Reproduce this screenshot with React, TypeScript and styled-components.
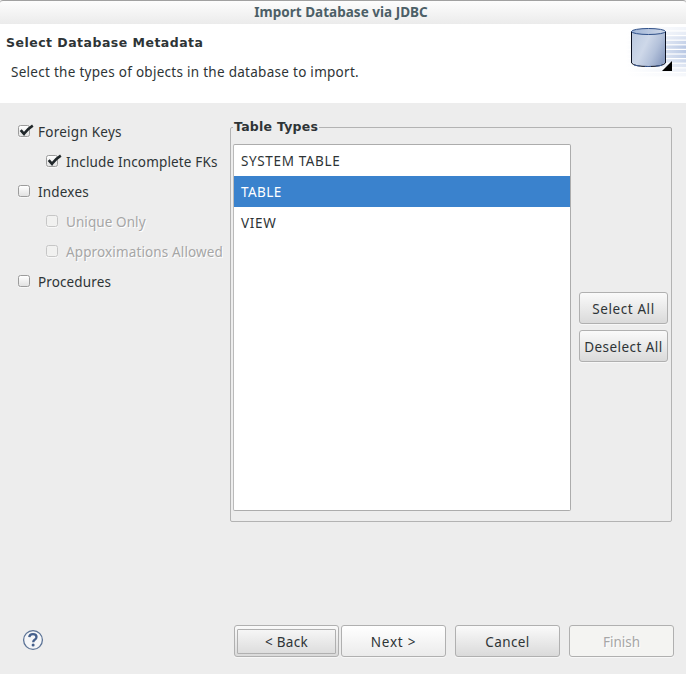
import React, { useState } from "react";
import styled, { createGlobalStyle, css } from "styled-components";

const GlobalStyle = createGlobalStyle`
  * { box-sizing: border-box; }
  body {
    margin: 0;
    background: #ededed;
    color: #2e3436;
    font-family: "Noto Sans", "Open Sans", sans-serif;
    font-size: 13.5px;
    line-height: 20px;
  }
`;

const Dialog = styled.main`
  width: 686px;
  height: 674px;
  display: flex;
  flex-direction: column;
  background: #ededed;
  overflow: hidden;
`;

const TitleBar = styled.header`
  height: 24px;
  flex: none;
  display: flex;
  justify-content: center;
  padding: 1px 4px 0 0;
  border-top: 1px solid #a1a1a1;
  border-radius: 3px 3px 0 0;
  background: linear-gradient(#fdfdfd, #ebebeb);
  color: #4c5f67;
  font-weight: 700;
`;

const Banner = styled.section`
  height: 79px;
  flex: none;
  display: flex;
  justify-content: space-between;
  background: #fff;
`;

const BannerText = styled.div`
  padding: 9px 0 0 6px;
`;

const Heading = styled.h1`
  margin: 0;
  font: 700 12.5px/20px "DejaVu Sans", sans-serif;
`;

const Message = styled.p`
  margin: 9px 0 0 5px;
`;

const Label = styled.span<{ $track?: number }>`
  letter-spacing: ${(p) => p.$track ?? 0}px;
  white-space: nowrap;
`;

const Body = styled.div`
  flex: 1;
  display: flex;
  align-items: flex-start;
`;

const Options = styled.div`
  width: 230px;
  flex: none;
  padding: 14px 0 0 18px;
`;

const Option = styled.label<{ $nested?: boolean; $disabled?: boolean }>`
  height: 30px;
  display: flex;
  align-items: center;
  gap: 8px;
  padding-left: ${(p) => (p.$nested ? 28 : 0)}px;
  ${(p) =>
    p.$disabled &&
    css`
      color: #a6a6a6;
      text-shadow: 1px 1px 0 #fff;
    `}
`;

const CheckBox = styled.span<{ $disabled?: boolean }>`
  width: 12px;
  height: 12px;
  margin-top: -3px;
  flex: none;
  border: 1px solid ${(p) => (p.$disabled ? "#c6c6c6" : "#9c9c9c")};
  border-radius: 2.5px;
  background: ${(p) => (p.$disabled ? "#f1f1f0" : "linear-gradient(#fff, #e2e2e2)")};
  box-shadow: 0 1px 0 #f8f8f8;
`;

const CheckMark = styled.svg`
  display: block;
  width: 16px;
  height: 14px;
  margin: -2px 0 0 -1px;
  overflow: visible;
`;

const Group = styled.fieldset`
  width: 442px;
  height: 403px;
  margin: 16px 0 0;
  padding: 0 2px;
  border: 1px solid #b3b3b3;
  border-radius: 2px;
  min-width: 0;
  display: flex;
`;

const Legend = styled.legend`
  padding: 0 1px;
  font: 700 12.5px/16px "DejaVu Sans", sans-serif;
`;

const GroupContent = styled.div`
  display: flex;
  gap: 8px;
  padding-top: 9px;
`;

const List = styled.ul`
  width: 338px;
  height: 367px;
  margin: 0;
  padding: 0;
  list-style: none;
  border: 1px solid #acacac;
  border-left-color: #bababa;
  border-radius: 2px;
  background: #fff;
`;

const Item = styled.li<{ $selected: boolean }>`
  height: 31px;
  padding: 6px 7px;
  cursor: default;
  ${(p) =>
    p.$selected &&
    css`
      background: #3a82cd;
      color: #fff;
    `}
`;

const SideButtons = styled.div`
  display: flex;
  flex-direction: column;
  gap: 6px;
  padding-top: 148px;
`;

const Button = styled.button<{ $width: number; $look?: "light" | "focused" }>`
  width: ${(p) => p.$width}px;
  height: 32px;
  padding: 2px 0 0;
  flex: none;
  display: flex;
  justify-content: center;
  align-items: center;
  position: relative;
  border: 1px solid #b0b0b0;
  border-radius: 3px;
  background: linear-gradient(#fafafa, #dadada);
  box-shadow: 0 1px 0 #f7f7f7;
  color: #2e3436;
  font: inherit;
  ${(p) => p.$look === "light" && css`background: linear-gradient(#fff, #ebebeb);`}
  ${(p) =>
    p.$look === "focused" &&
    css`
      &::after {
        content: "";
        position: absolute;
        inset: 3px 2px 2px;
        border: 1px solid #b0b0b0;
        border-radius: 1px;
      }
    `}
  &:disabled {
    background: #f4f4f2;
    color: #a6a6a6;
    text-shadow: 1px 1px 0 #fff;
  }
`;

const Footer = styled.footer`
  height: 49px;
  flex: none;
  display: flex;
  align-items: flex-start;
  padding: 0 12px 0 22px;
`;

const HelpIcon = styled.svg`
  width: 22px;
  height: 22px;
  margin: 4px auto 0 0;
`;

const Actions = styled.div`
  display: flex;
  gap: 9px;
`;

const Pair = styled.div`
  display: flex;
  gap: 2px;
`;

const stripeOpacities = [0.2, 0.35, 0.55, 0.8, 1, 1, 0.9, 0.75, 0.5, 0.3, 0.15];

function DatabaseArt() {
  return (
    <svg width="76" height="79" viewBox="610 24 76 79">
      <defs>
        <linearGradient id="fade" gradientUnits="userSpaceOnUse" x1="626" x2="686" y1="0" y2="0">
          <stop offset="0" stopColor="#b9c9e5" stopOpacity="0" />
          <stop offset="0.6" stopColor="#bccbe6" stopOpacity="0.55" />
          <stop offset="1" stopColor="#b9c8e4" />
        </linearGradient>
        <linearGradient id="body" x1="0" x2="1" y1="0.2" y2="0.7">
          <stop offset="0" stopColor="#bccae0" />
          <stop offset="0.4" stopColor="#ced8e9" />
          <stop offset="0.7" stopColor="#b3c1da" />
          <stop offset="1" stopColor="#8b9dc1" />
        </linearGradient>
        <linearGradient id="top" x1="0" x2="1">
          <stop offset="0" stopColor="#9fb4d6" />
          <stop offset="1" stopColor="#d0d9e9" />
        </linearGradient>
      </defs>
      {stripeOpacities.map((opacity, i) => (
        <rect key={i} x="626" y={27 + i * 4.6} width="60" height="3.4" fill="url(#fade)" opacity={opacity} />
      ))}
      <path d="M631.5 31.5V63Q634 66.5 648.5 66.5T665.5 63V31.5Z" fill="url(#body)" stroke="#0b1020" />
      <path d="M634 65Q640 66.5 648.5 66.5T663 65" fill="none" stroke="#3e5d96" strokeDasharray="6 5" />
      <ellipse cx="648.5" cy="31.5" rx="17" ry="3" fill="url(#top)" stroke="#2e4f88" />
      <path d="M672 61V71H662Z" fill="#000" />
    </svg>
  );
}

interface OptionData {
  text: string;
  track: number;
  checked?: boolean;
  nested?: boolean;
  disabled?: boolean;
}

const options: OptionData[] = [
  { text: "Foreign Keys", track: 0.25, checked: true },
  { text: "Include Incomplete FKs", track: 0.16, checked: true, nested: true },
  { text: "Indexes", track: 0.2 },
  { text: "Unique Only", track: 0.08, nested: true, disabled: true },
  { text: "Approximations Allowed", track: 0.13, nested: true, disabled: true },
  { text: "Procedures", track: 0.12 },
];

const tableTypes = [
  { text: "SYSTEM TABLE", track: 0.63 },
  { text: "TABLE", track: 0.4 },
  { text: "VIEW", track: 0.7 },
];

export default function App() {
  const [selected, setSelected] = useState(["TABLE"]);
  return (
    <>
      <GlobalStyle />
      <Dialog>
        <TitleBar>
          <Label $track={0.02}>Import Database via JDBC</Label>
        </TitleBar>
        <Banner>
          <BannerText>
            <Heading>
              <Label $track={0.48}>Select Database Metadata</Label>
            </Heading>
            <Message>
              <Label $track={0.28}>Select the types of objects in the database to import.</Label>
            </Message>
          </BannerText>
          <DatabaseArt />
        </Banner>
        <Body>
          <Options>
            {options.map((o) => (
              <Option key={o.text} $nested={o.nested} $disabled={o.disabled}>
                <CheckBox $disabled={o.disabled}>
                  {o.checked && (
                    <CheckMark viewBox="0 0 16 14">
                      <path d="M2.7 6.2L6 9.8Q9.5 5 14.8 1.7" fill="none" stroke="#20272a" strokeWidth="2.7" />
                    </CheckMark>
                  )}
                </CheckBox>
                <Label $track={o.track}>{o.text}</Label>
              </Option>
            ))}
          </Options>
          <Group>
            <Legend>
              <Label $track={0.25}>Table Types</Label>
            </Legend>
            <GroupContent>
              <List>
                {tableTypes.map((t) => (
                  <Item key={t.text} $selected={selected.includes(t.text)} onClick={() => setSelected([t.text])}>
                    <Label $track={t.track}>{t.text}</Label>
                  </Item>
                ))}
              </List>
              <SideButtons>
                <Button $width={89} onClick={() => setSelected(tableTypes.map((t) => t.text))}>
                  <Label $track={0.6}>Select All</Label>
                </Button>
                <Button $width={89} onClick={() => setSelected([])}>
                  <Label $track={0.45}>Deselect All</Label>
                </Button>
              </SideButtons>
            </GroupContent>
          </Group>
        </Body>
        <Footer>
          <HelpIcon viewBox="0 0 22 22">
            <circle cx="11" cy="11" r="9.4" fill="#f5f6f8" stroke="#5c7396" strokeWidth="1.3" />
            <path
              d="M7.3 8.2Q7.5 5.2 11 5.2T14.5 8Q14.5 9.6 12.7 10.7Q11.2 11.6 11.2 13.2"
              fill="none"
              stroke="#45608c"
              strokeWidth="2.3"
            />
            <circle cx="11.1" cy="16" r="1.5" fill="#45608c" />
          </HelpIcon>
          <Actions>
            <Pair>
              <Button $width={105} $look="focused">
                <Label $track={0.25}>&lt; Back</Label>
              </Button>
              <Button $width={105} $look="light">
                <Label $track={0.75}>Next &gt;</Label>
              </Button>
            </Pair>
            <Button $width={105}>
              <Label $track={0.4}>Cancel</Label>
            </Button>
            <Button $width={105} disabled>
              <Label $track={0}>Finish</Label>
            </Button>
          </Actions>
        </Footer>
      </Dialog>
    </>
  );
}
